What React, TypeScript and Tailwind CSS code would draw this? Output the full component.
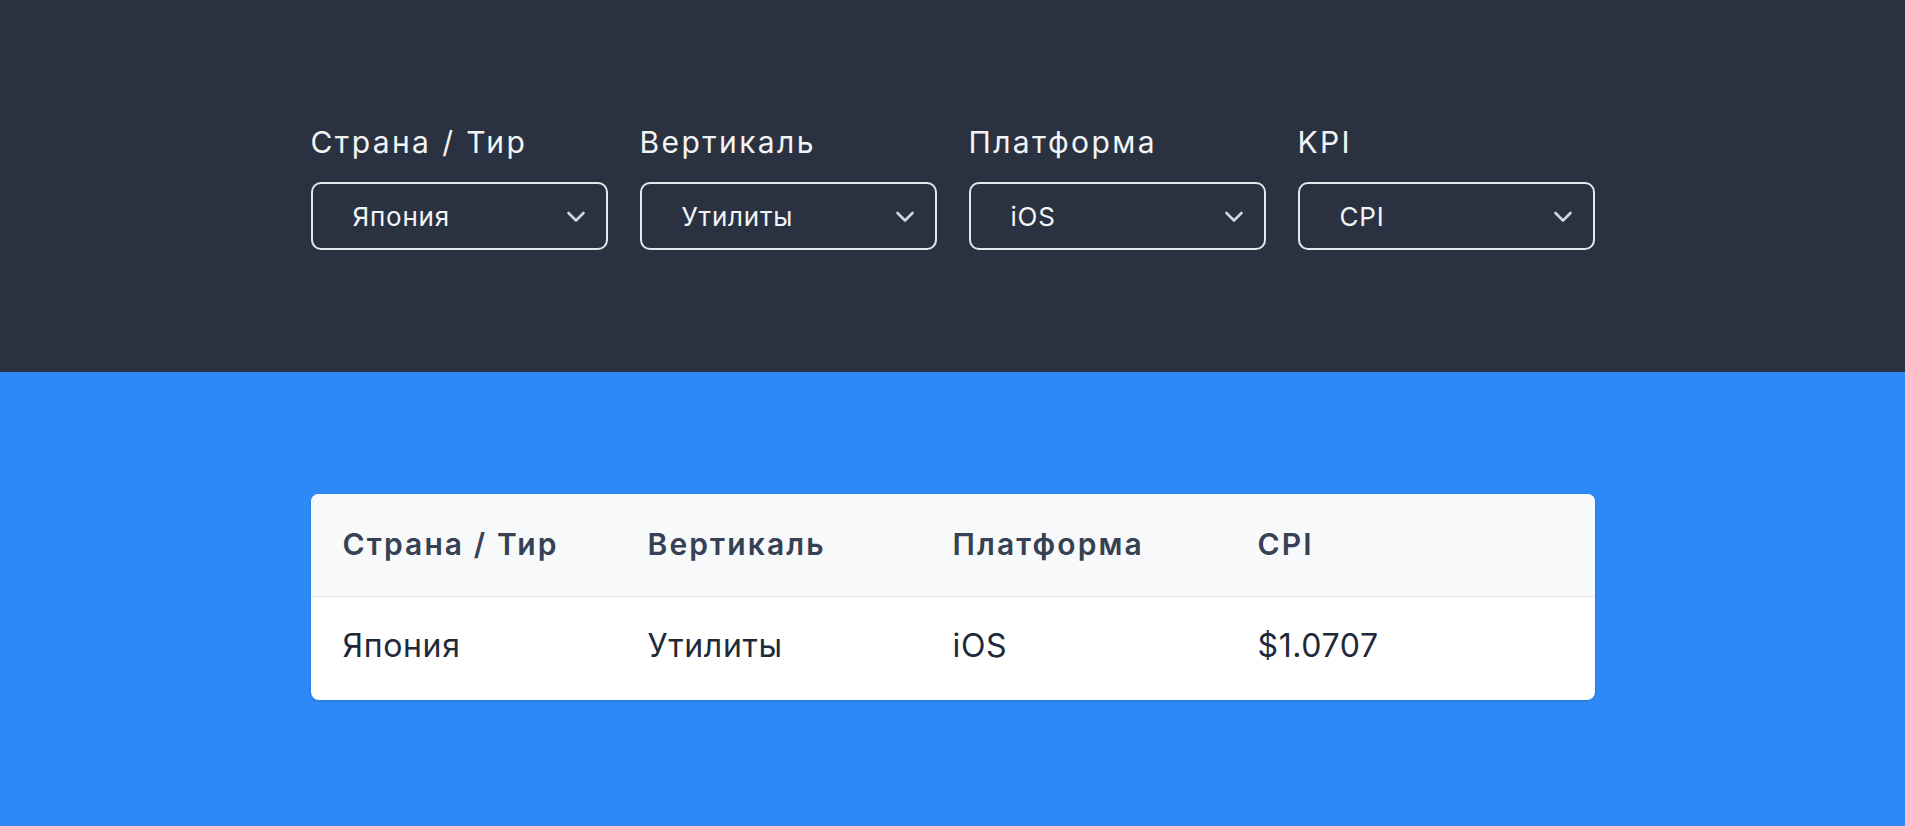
const filters = [
  { label: "Страна / Тир", value: "Япония" },
  { label: "Вертикаль", value: "Утилиты" },
  { label: "Платформа", value: "iOS" },
  { label: "KPI", value: "CPI" },
];

const columns = ["Страна / Тир", "Вертикаль", "Платформа", "CPI"];
const row = ["Япония", "Утилиты", "iOS", "$1.0707"];

const Chevron = () => (
  <svg width="20" height="13" viewBox="0 0 20 13" fill="none" className="text-gray-300">
    <polyline
      points="2.5,3 10,10.5 17.5,3"
      stroke="currentColor"
      strokeWidth="2.6"
      strokeLinecap="round"
      strokeLinejoin="round"
    />
  </svg>
);

const FilterSelect = ({ label, value }: { label: string; value: string }) => {
  return (
    <div className="flex flex-col gap-[22px]">
      <span className="text-[30px] leading-[36px] tracking-[0.08em] text-gray-100">{label}</span>
      <button
        type="button"
        className="flex h-[68px] w-full items-center justify-between rounded-[10px] border-2 border-gray-200 pl-10 pr-5 text-left"
      >
        <span className="text-[26px] tracking-[0.03em] text-gray-100">{value}</span>
        <Chevron />
      </button>
    </div>
  );
};

const App = () => {
  return (
    <div className="min-h-screen font-['Inter',sans-serif]">
      <section className="h-[372px] bg-[#2a3241] pt-[124px]">
        <div className="mx-auto grid w-[1284px] grid-cols-4 gap-8">
          {filters.map((f) => (
            <FilterSelect key={f.label} label={f.label} value={f.value} />
          ))}
        </div>
      </section>
      <section className="h-[454px] bg-[#2c89f6] pt-[122px]">
        <div className="mx-auto w-[1284px] overflow-hidden rounded-lg bg-white shadow-sm">
          <div className="grid h-[103px] grid-cols-4 items-center border-b border-gray-200 bg-[#f8f9fb] px-8">
            {columns.map((c) => (
              <span key={c} className="pb-[2px] text-[30px] font-semibold tracking-[0.07em] text-gray-700">
                {c}
              </span>
            ))}
          </div>
          <div className="grid h-[103px] grid-cols-4 items-center px-8">
            {row.map((v) => (
              <span key={v} className="pb-[6px] text-[32px] tracking-[0.02em] text-gray-800">
                {v}
              </span>
            ))}
          </div>
        </div>
      </section>
    </div>
  );
};

export default App;
